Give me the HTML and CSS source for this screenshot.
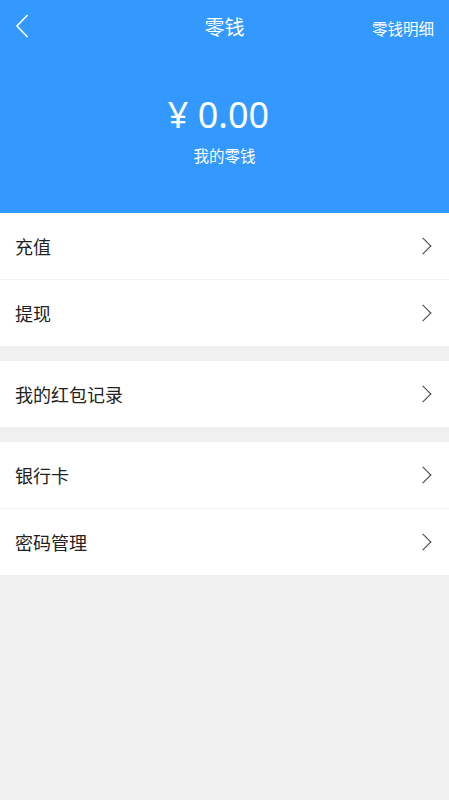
FILE: index.html
```html
<!DOCTYPE html>
<html lang="zh">
<head>
  <meta charset="UTF-8" />
  <meta name="viewport" content="width=device-width, initial-scale=1.0"/>
  <title>零钱</title>
  <link rel="stylesheet" href="styles.css">
</head>
<body>
  <div class="header">
    <div class="nav">
      <a class="nav-back">
        <svg width="14" height="24" viewBox="0 0 14 24">
          <polyline points="12.5,1 2,12 12.5,23" fill="none" stroke="#fff" stroke-width="1.6"/>
        </svg>
      </a>
      <div class="nav-title">零钱</div>
      <a class="nav-right">零钱明细</a>
    </div>
    <div class="balance">
      <div class="balance-amount">¥ 0.00</div>
      <div class="balance-label">我的零钱</div>
    </div>
  </div>

  <div class="group">
    <div class="row"><span>充值</span><i class="arrow"></i></div>
    <div class="row"><span>提现</span><i class="arrow"></i></div>
  </div>

  <div class="group">
    <div class="row"><span>我的红包记录</span><i class="arrow"></i></div>
  </div>

  <div class="group">
    <div class="row"><span>银行卡</span><i class="arrow"></i></div>
    <div class="row"><span>密码管理</span><i class="arrow"></i></div>
  </div>
</body>
</html>
```

FILE: styles.css
```css
body {
  margin: 0;
  min-height: 100vh;
  background-color: #f0f0f0;
  font-family: "Noto Sans", "Noto Sans CJK SC", sans-serif;
  color: #222;
}

.header {
  height: 213px;
  background-color: #3399fe;
  color: #fff;
}

.nav {
  height: 52px;
  display: flex;
  align-items: center;
  justify-content: space-between;
  padding: 0 15px;
}

.nav-back {
  display: flex;
  width: 60px;
}

.nav-title {
  font-size: 20px;
}

.nav-right {
  width: 60px;
  font-size: 15.5px;
  white-space: nowrap;
  display: flex;
  justify-content: flex-end;
  padding-top: 4px;
}

.balance {
  display: flex;
  flex-direction: column;
  align-items: center;
  padding-top: 41px;
}

.balance-amount {
  font-size: 36px;
  line-height: 44px;
  margin-right: 12px;
}

.balance-label {
  font-size: 15.5px;
  line-height: 20px;
  margin-top: 9px;
}

.group {
  background-color: #fff;
  margin-bottom: 15px;
}

.row {
  height: 66px;
  display: flex;
  align-items: center;
  justify-content: space-between;
  padding: 0 17px 0 15px;
  font-size: 18px;
}

.row + .row {
  border-top: 1px solid #f2f2f2;
}

.arrow {
  width: 11px;
  height: 11px;
  border-top: 1.5px solid #444;
  border-right: 1.5px solid #444;
  transform: rotate(45deg);
  margin-right: 3px;
}
```
